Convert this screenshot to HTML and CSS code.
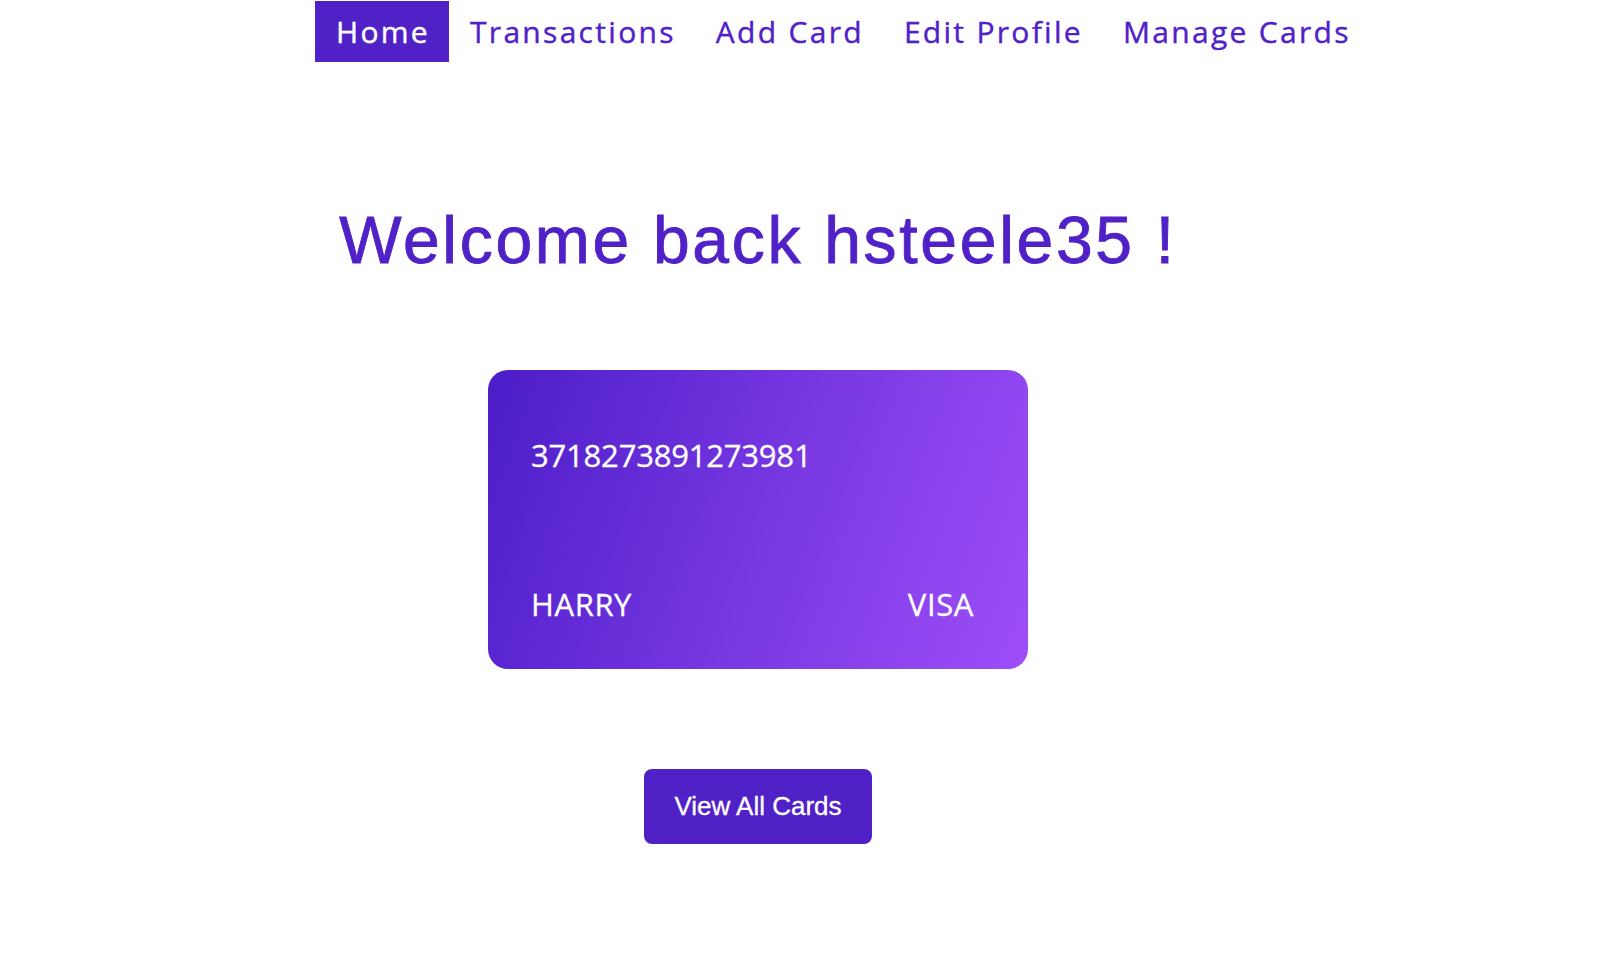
FILE: index.html
```html
<!DOCTYPE html>
<html lang="en">
<head>
<meta charset="utf-8">
<title>Home</title>
<link rel="stylesheet" href="styles.css">
</head>
<body>
  <nav class="nav">
    <a class="nav-link active" href="#">Home</a>
    <a class="nav-link" href="#">Transactions</a>
    <a class="nav-link" href="#">Add Card</a>
    <a class="nav-link" href="#">Edit Profile</a>
    <a class="nav-link" href="#">Manage Cards</a>
  </nav>
  <main class="main">
    <h1 class="welcome">Welcome back hsteele35 !</h1>
    <div class="card">
      <div class="card-number">3718273891273981</div>
      <div class="card-bottom">
        <span class="card-name">HARRY</span>
        <span class="card-type">VISA</span>
      </div>
    </div>
    <a class="btn" href="#">View All Cards</a>
  </main>
</body>
</html>
```

FILE: styles.css
```css
* { box-sizing: border-box; }

html, body {
  margin: 0;
  padding: 0;
  background: #ffffff;
}

body {
  font-family: "Open Sans", "Liberation Sans", sans-serif;
  color: #5121c8;
}

.nav {
  display: flex;
  margin: 1px 0 0 315px;
  height: 61px;
}

.nav-link {
  display: flex;
  align-items: center;
  padding: 0 19px 0 21px;
  font-size: 30px;
  letter-spacing: 2.3px;
  -webkit-text-stroke: 0.4px currentColor;
  color: #5121c8;
  text-decoration: none;
  white-space: nowrap;
}

.nav-link.active {
  background: #5121c8;
  color: #ffffff;
}

.main {
  width: 884px;
  margin-left: 316px;
  display: flex;
  flex-direction: column;
  align-items: center;
}

.welcome {
  margin: 140px 0 0 0;
  font-family: "Liberation Sans", Arial, sans-serif;
  font-weight: 400;
  font-size: 66px;
  line-height: 76px;
  letter-spacing: 2.7px;
  -webkit-text-stroke: 0.9px #5121c8;
  color: #5121c8;
  white-space: nowrap;
}

.card {
  margin-top: 92px;
  width: 540px;
  height: 299px;
  border-radius: 20px;
  padding: 65px 54px 45px 43px;
  background: linear-gradient(110deg, #4b1dc8 0%, #7a39e3 55%, #9e4ef8 100%);
  color: #ffffff;
  display: flex;
  flex-direction: column;
  justify-content: space-between;
  font-size: 31px;
  line-height: 40px;
  -webkit-text-stroke: 0.3px #ffffff;
}

.card-number {
  letter-spacing: -0.2px;
}

.card-bottom {
  display: flex;
  justify-content: space-between;
}

.card-name,
.card-type {
  letter-spacing: 0.6px;
}

.btn {
  margin-top: 100px;
  width: 228px;
  height: 75px;
  border-radius: 8px;
  background: #5121c8;
  color: #ffffff;
  display: flex;
  align-items: center;
  justify-content: center;
  font-family: "Liberation Sans", Arial, sans-serif;
  font-size: 26px;
  -webkit-text-stroke: 0.3px #ffffff;
  text-decoration: none;
}
```
